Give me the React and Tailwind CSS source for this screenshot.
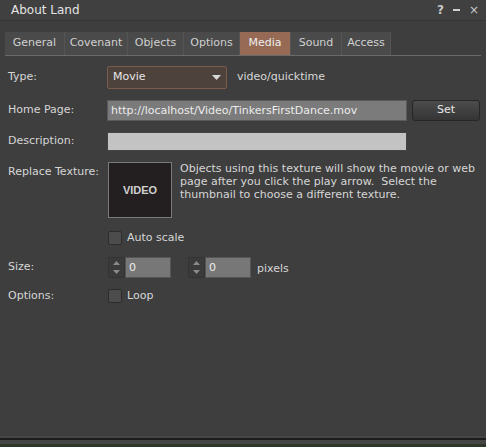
import React from "react";

const tabs = [
  { name: "General", w: "w-[60px]" },
  { name: "Covenant", w: "w-[63px]" },
  { name: "Objects", w: "w-[56px]" },
  { name: "Options", w: "w-[56px]" },
  { name: "Media", w: "w-[51px]" },
  { name: "Sound", w: "w-[51px]" },
  { name: "Access", w: "w-[49px]" },
];

const Checkbox = ({ label }) => (
  <div className="flex items-center gap-[5px]">
    <div className="w-[14px] h-[14px] bg-[#4c4c4c] border border-[#2c2c2c] rounded-[2px]" />
    <span>{label}</span>
  </div>
);

const Spinner = ({ value }) => (
  <div className="flex h-[21px]">
    <div className="w-[17px] flex flex-col justify-between items-center bg-[#3a3a3a] border border-[#333] py-[2px]">
      <svg width="7" height="5" viewBox="0 0 7 5"><path d="M0 5 L3.5 1 L7 5 Z" fill="#8a8a8a" /></svg>
      <svg width="7" height="5" viewBox="0 0 7 5"><path d="M0 0 L3.5 4 L7 0 Z" fill="#8a8a8a" /></svg>
    </div>
    <div className="w-[46px] bg-[#777] border border-[#555] pl-[3px] leading-[19px] text-[#eee]">{value}</div>
  </div>
);

export default function App() {
  return (
    <div
      className="w-[486px] h-[447px] bg-[#3e3e3e] text-[#d6d6d6] text-[11px] flex flex-col overflow-hidden"
      style={{ fontFamily: '"DejaVu Sans", sans-serif' }}
    >
      {/* Title bar */}
      <div className="h-[21px] flex items-center justify-between pl-[11px] pr-[7px] bg-[#404040] border-b border-[#353535]">
        <span className="text-[12px] text-[#e4e4e4]">About Land</span>
        <div className="flex items-center gap-[9px] text-[#c8c8c8] text-[12px] font-bold">
          <span>?</span>
          <span className="w-[7px] h-[2px] bg-[#cfcfcf]" />
          <span className="font-normal">×</span>
        </div>
      </div>

      {/* Tabs */}
      <div className="mt-[11px] mx-[5px] flex border-b border-[#6a6a6a] h-[24px]">
        {tabs.map((t) => (
          <div
            key={t.name}
            className={
              t.name === "Media"
                ? `${t.w} flex items-center justify-center bg-[#976a55] text-[#eee] border-r border-[#555]`
                : `${t.w} flex items-center justify-center bg-[#4a4a4a] text-[#d0d0d0] border-r border-[#555]`
            }
          >
            {t.name}
          </div>
        ))}
      </div>

      {/* Form */}
      <div className="flex flex-col pl-[8px] pr-[6px] pt-[10px]">
        <div className="flex items-center h-[23px]">
          <span className="w-[99px] shrink-0">Type:</span>
          <div className="w-[120px] h-[23px] flex items-center justify-between px-[5px] bg-[#4e423d] border border-[#7a5b4c] rounded-[2px] text-[#e6e6e6]">
            <span>Movie</span>
            <svg width="9" height="5" viewBox="0 0 9 5"><path d="M0 0 L9 0 L4.5 5 Z" fill="#d8d8d8" /></svg>
          </div>
          <span className="ml-[10px]">video/quicktime</span>
        </div>

        <div className="flex items-center mt-[11px] h-[21px]">
          <span className="w-[99px] shrink-0">Home Page:</span>
          <div className="w-[300px] h-[21px] bg-[#7b7b7b] border border-[#5a5a5a] pl-[3px] leading-[19px] text-[#ececec]">
            http://localhost/Video/TinkersFirstDance.mov
          </div>
          <div className="ml-[5px] w-[68px] h-[21px] flex items-center justify-center bg-gradient-to-b from-[#4c4c4c] to-[#353535] border border-[#262626] rounded-[3px] text-[#e8e8e8]">
            Set
          </div>
        </div>

        <div className="flex items-center mt-[11px] h-[19px]">
          <span className="w-[99px] shrink-0">Description:</span>
          <div className="w-[300px] h-[19px] bg-[#c3c3c3] border border-[#444]" />
        </div>

        <div className="flex mt-[11px]">
          <span className="w-[100px] shrink-0 whitespace-nowrap pt-[2px]">Replace Texture:</span>
          <div className="w-[64px] h-[56px] bg-[#231f20] border border-[#7a7a7a] flex items-center justify-center shrink-0">
            <span className="font-bold text-[11px] text-[#d0d0d0]" style={{ fontFamily: '"Liberation Sans", sans-serif' }}>VIDEO</span>
          </div>
          <p className="ml-[8px] leading-[13px] whitespace-nowrap">
            Objects using this texture will show the movie or web
            <br />
            page after you click the play arrow.&nbsp; Select the
            <br />
            thumbnail to choose a different texture.
          </p>
        </div>

        <div className="ml-[100px] mt-[12px]">
          <Checkbox label="Auto scale" />
        </div>

        <div className="flex items-center mt-[10px]">
          <span className="w-[100px] shrink-0">Size:</span>
          <Spinner value="0" />
          <div className="ml-[17px]">
            <Spinner value="0" />
          </div>
          <span className="ml-[6px] mt-[4px]">pixels</span>
        </div>

        <div className="flex items-center mt-[10px]">
          <span className="w-[100px] shrink-0">Options:</span>
          <Checkbox label="Loop" />
        </div>
      </div>

      <div className="flex-1" />
      <div className="h-[2px] bg-[#454545]" />
      <div className="h-[2px] bg-[#1c1c1c]" />
      <div className="h-[4px] bg-[#454545]" />
      <div className="h-[3px] bg-[#2e3828]" />
    </div>
  );
}
